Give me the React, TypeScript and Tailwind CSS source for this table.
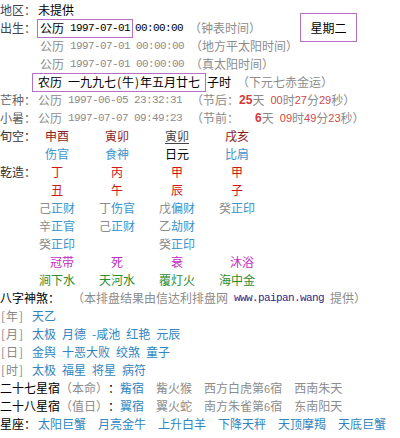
import React from 'react';

const MONO = "font-['Liberation_Mono',monospace] text-[11px] tracking-[-0.6px]";

function Row({ children, className = '' }: { children?: React.ReactNode; className?: string }) {
  return <div className={`flex h-[18px] items-center whitespace-nowrap ${className}`}>{children}</div>;
}

function Cell({ children, className = '' }: { children?: React.ReactNode; className?: string }) {
  return (
    <div className="w-[60px]">
      <div className={`w-[38px] text-center ${className}`}>{children}</div>
    </div>
  );
}

function Hidden({ stem, god }: { stem: string; god: string }) {
  return (
    <>
      <span className="text-[#8c8c8c]">{stem}</span>
      <span className="text-[#3b93cc]">{god}</span>
    </>
  );
}

function Bracket({ c }: { c: string }) {
  return (
    <span className="flex w-[26px] text-[#888]">
      <span className="w-[6px] text-center">[</span>
      <span>{c}</span>
      <span className="w-[6px] text-center">]</span>
    </span>
  );
}

const shensha = [
  { k: '年', items: ['天乙'] },
  { k: '月', items: ['太极', '月德', '-咸池', '红艳', '元辰'] },
  { k: '日', items: ['金舆', '十恶大败', '绞煞', '童子'] },
  { k: '时', items: ['太极', '福星', '将星', '病符'] },
];

export default function App() {
  return (
    <div className="relative h-[438px] w-[400px] overflow-hidden bg-white pt-[1px] font-['Noto_Sans_CJK_SC',sans-serif] text-[12px] leading-[18px] text-black">
      <div className="absolute left-[300px] top-[13px] flex h-[29px] w-[57px] items-center justify-center border border-[#b56fc4]">
        星期二
      </div>

      <Row>
        <span className="w-[38px] text-[#444]">地区：</span>
        <span>未提供</span>
      </Row>
      <Row>
        <span className="w-[37px] text-[#444]">出生：</span>
        <span className="flex h-[19px] items-center border border-[#b56fc4] px-[2px]">
          公历<span className={`ml-[6px] ${MONO}`}>1997-07-01</span>
        </span>
        <span className={`ml-[2px] ${MONO}`}>00:00:00</span>
        <span className="ml-[6px] text-[#8c8c8c]">（钟表时间）</span>
      </Row>
      <Row className="pl-[40px] text-[#8c8c8c]">
        公历<span className={`ml-[6px] ${MONO}`}>1997-07-01</span>
        <span className={`ml-[6px] ${MONO}`}>00:00:00</span>
        <span className="ml-[6px]">（地方平太阳时间）</span>
      </Row>
      <Row className="pl-[40px] text-[#8c8c8c]">
        公历<span className={`ml-[6px] ${MONO}`}>1997-07-01</span>
        <span className={`ml-[6px] ${MONO}`}>00:00:00</span>
        <span className="ml-[6px]">（真太阳时间）</span>
      </Row>
      <Row>
        <span className="ml-[32px] flex h-[19px] items-center border border-[#b56fc4] px-[5px]">
          农历<span className="ml-[6px]">一九九七</span>
          <span className="w-[6px] text-center">(</span>牛<span className="w-[6px] text-center">)</span>
          年五月廿七
        </span>
        <span className="ml-[1px]">子时</span>
        <span className="ml-[6px] text-[#8c8c8c]">（下元七赤金运）</span>
      </Row>
      <Row className="text-[#8c8c8c]">
        <span className="w-[38px] text-[#666]">芒种：</span>
        公历<span className={`ml-[6px] ${MONO}`}>1997-06-05</span>
        <span className={`ml-[6px] ${MONO}`}>23:32:31</span>
        <span className="ml-[9px]">（节后：</span>
        <span className="font-['Liberation_Sans',sans-serif] font-bold text-[#d23a3a]">25</span>天
        <span className="ml-[6px] font-['Liberation_Sans',sans-serif] text-[11px] text-[#d24848]">00</span>时
        <span className="font-['Liberation_Sans',sans-serif] text-[11px] text-[#d24848]">27</span>分
        <span className="font-['Liberation_Sans',sans-serif] text-[11px] text-[#d24848]">29</span>秒）
      </Row>
      <Row className="text-[#8c8c8c]">
        <span className="w-[38px] text-[#666]">小暑：</span>
        公历<span className={`ml-[6px] ${MONO}`}>1997-07-07</span>
        <span className={`ml-[6px] ${MONO}`}>09:49:23</span>
        <span className="ml-[9px]">（节前：</span>
        <span className="ml-[16px] font-['Liberation_Sans',sans-serif] font-bold text-[#d23a3a]">6</span>天
        <span className="ml-[6px] font-['Liberation_Sans',sans-serif] text-[11px] text-[#d24848]">09</span>时
        <span className="font-['Liberation_Sans',sans-serif] text-[11px] text-[#d24848]">49</span>分
        <span className="font-['Liberation_Sans',sans-serif] text-[11px] text-[#d24848]">23</span>秒）
      </Row>

      <Row>
        <span className="w-[38px] text-[#333]">旬空：</span>
        <Cell className="text-[#8b1c1c]">申酉</Cell>
        <Cell className="text-[#8b1c1c]">寅卯</Cell>
        <Cell className="text-[#444] underline underline-offset-2">寅卯</Cell>
        <Cell className="text-[#8b1c1c]">戌亥</Cell>
      </Row>
      <Row>
        <span className="w-[38px]" />
        <Cell className="text-[#3b93cc]">伤官</Cell>
        <Cell className="text-[#3b93cc]">食神</Cell>
        <Cell>日元</Cell>
        <Cell className="text-[#3b93cc]">比肩</Cell>
      </Row>
      <Row>
        <span className="w-[38px] text-[#333]">乾造：</span>
        <Cell className="text-[#d01818]">丁</Cell>
        <Cell className="text-[#d01818]">丙</Cell>
        <Cell className="text-[#d01818]">甲</Cell>
        <Cell className="text-[#d01818]">甲</Cell>
      </Row>
      <Row>
        <span className="w-[38px]" />
        <Cell className="text-[#d01818]">丑</Cell>
        <Cell className="text-[#d01818]">午</Cell>
        <Cell className="text-[#d01818]">辰</Cell>
        <Cell className="text-[#d01818]">子</Cell>
      </Row>
      <Row>
        <span className="w-[38px]" />
        <Cell><Hidden stem="己" god="正财" /></Cell>
        <Cell><Hidden stem="丁" god="伤官" /></Cell>
        <Cell><Hidden stem="戊" god="偏财" /></Cell>
        <Cell><Hidden stem="癸" god="正印" /></Cell>
      </Row>
      <Row>
        <span className="w-[38px]" />
        <Cell><Hidden stem="辛" god="正官" /></Cell>
        <Cell><Hidden stem="己" god="正财" /></Cell>
        <Cell><Hidden stem="乙" god="劫财" /></Cell>
        <Cell />
      </Row>
      <Row>
        <span className="w-[38px]" />
        <Cell><Hidden stem="癸" god="正印" /></Cell>
        <Cell />
        <Cell><Hidden stem="癸" god="正印" /></Cell>
        <Cell />
      </Row>
      <Row>
        <span className="w-[38px]" />
        <Cell className="pl-[10px] text-[#c42ac4]">冠带</Cell>
        <Cell className="text-[#c42ac4]">死</Cell>
        <Cell className="text-[#c42ac4]">衰</Cell>
        <Cell className="pl-[10px] text-[#c42ac4]">沐浴</Cell>
      </Row>
      <Row>
        <span className="w-[38px]" />
        <Cell className="text-[#2e8b2e]">涧下水</Cell>
        <Cell className="text-[#2e8b2e]">天河水</Cell>
        <Cell className="text-[#2e8b2e]">覆灯火</Cell>
        <Cell className="text-[#2e8b2e]">海中金</Cell>
      </Row>

      <Row>
        <span>八字神煞：</span>
        <span className="ml-[12px] text-[#8c8c8c]">（本排盘结果由信达利排盘网</span>
        <span className={`ml-[6px] text-[#2b2b8c] ${MONO}`}>www.paipan.wang</span>
        <span className="ml-[6px] text-[#8c8c8c]">提供）</span>
      </Row>
      {shensha.map((s) => (
        <Row key={s.k}>
          <Bracket c={s.k} />
          <span className="ml-[6px] flex gap-[6px] text-[#2f86c0]">
            {s.items.map((it, i) => (
              <span key={i}>{it}</span>
            ))}
          </span>
        </Row>
      ))}

      <Row>
        二十七星宿<span className="text-[#8c8c8c]">（本命）</span>：
        <span className="text-[#2f86c0]">觜宿</span>
        <span className="ml-[12px] text-[#8c8c8c]">觜火猴</span>
        <span className="ml-[12px] text-[#8c8c8c]">西方白虎第<span className="font-['Liberation_Sans',sans-serif] text-[11px]">6</span>宿</span>
        <span className="ml-[12px] text-[#8c8c8c]">西南朱天</span>
      </Row>
      <Row>
        二十八星宿<span className="text-[#8c8c8c]">（值日）</span>：
        <span className="text-[#2f86c0]">翼宿</span>
        <span className="ml-[12px] text-[#8c8c8c]">翼火蛇</span>
        <span className="ml-[12px] text-[#8c8c8c]">南方朱雀第<span className="font-['Liberation_Sans',sans-serif] text-[11px]">6</span>宿</span>
        <span className="ml-[12px] text-[#8c8c8c]">东南阳天</span>
      </Row>
      <Row>
        <span className="w-[38px]">星座：</span>
        <span className="flex gap-[12px] text-[#2f86c0]">
          {['太阳巨蟹', '月亮金牛', '上升白羊', '下降天秤', '天顶摩羯', '天底巨蟹'].map((z) => (
            <span key={z}>{z}</span>
          ))}
        </span>
      </Row>
    </div>
  );
}
